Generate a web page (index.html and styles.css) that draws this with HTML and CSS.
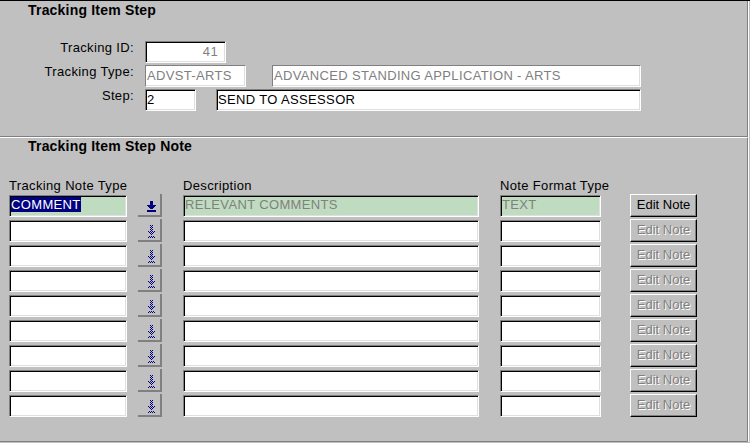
FILE: index.html
```html
<!DOCTYPE html>
<html>
<head>
<meta charset="utf-8">
<link rel="stylesheet" href="styles.css">
</head>
<body>
<div class="screen">
  <section class="panel panel-step">
    <h1 class="title">Tracking Item Step</h1>
    <div class="form">
      <div class="row">
        <span class="lbl">Tracking ID:</span>
        <div class="fld ro w-id">41</div>
      </div>
      <div class="row">
        <span class="lbl">Tracking Type:</span>
        <div class="fld ro flat w-code">ADVST-ARTS</div>
        <div class="fld ro flat w-tdesc">ADVANCED STANDING APPLICATION - ARTS</div>
      </div>
      <div class="row">
        <span class="lbl">Step:</span>
        <div class="fld w-step">2</div>
        <div class="fld w-sdesc">SEND TO ASSESSOR</div>
      </div>
    </div>
  </section>

  <section class="panel panel-note">
    <h2 class="title">Tracking Item Step Note</h2>
    <div class="grid">
      <div class="ghead">
        <span class="c-type">Tracking Note Type</span>
        <span class="c-btn"></span>
        <span class="c-desc">Description</span>
        <span class="c-fmt">Note Format Type</span>
      </div>

      <div class="grow">
        <div class="cell c-type cur"><span class="sel">COMMENT</span></div>
        <div class="abtn c-btn"><svg class="ico-on" width="9" height="11" viewBox="0 0 9 11" shape-rendering="crispEdges"><g fill="#000080"><rect x="3" y="0" width="3" height="4"/><rect x="0" y="4" width="9" height="1"/><rect x="1" y="5" width="7" height="1"/><rect x="2" y="6" width="5" height="1"/><rect x="3" y="7" width="3" height="1"/><rect x="0" y="9" width="9" height="2"/></g></svg></div>
        <div class="cell c-desc cur ro">RELEVANT COMMENTS</div>
        <div class="cell c-fmt cur ro">TEXT</div>
        <div class="ebtn c-edit">Edit Note</div>
      </div>

      <div class="grow">
        <div class="cell c-type"></div>
        <div class="abtn c-btn"><svg class="ico-off" width="7" height="13" viewBox="0 0 7 13" shape-rendering="crispEdges"><path fill="#000080" d="M2 0h1v1h-1zM4 0h1v1h-1zM3 1h1v1h-1zM2 2h1v1h-1zM4 2h1v1h-1zM3 3h1v1h-1zM2 4h1v1h-1zM4 4h1v1h-1zM3 5h1v1h-1zM0 6h1v1h-1zM2 6h1v1h-1zM4 6h1v1h-1zM6 6h1v1h-1zM1 7h1v1h-1zM3 7h1v1h-1zM5 7h1v1h-1zM2 8h1v1h-1zM4 8h1v1h-1zM3 9h1v1h-1zM1 11h1v1h-1zM3 11h1v1h-1zM5 11h1v1h-1zM0 12h1v1h-1zM2 12h1v1h-1zM4 12h1v1h-1zM6 12h1v1h-1z"/></svg></div>
        <div class="cell c-desc"></div>
        <div class="cell c-fmt"></div>
        <div class="ebtn c-edit off">Edit Note</div>
      </div>

      <div class="grow">
        <div class="cell c-type"></div>
        <div class="abtn c-btn"><svg class="ico-off" width="7" height="13" viewBox="0 0 7 13" shape-rendering="crispEdges"><path fill="#000080" d="M2 0h1v1h-1zM4 0h1v1h-1zM3 1h1v1h-1zM2 2h1v1h-1zM4 2h1v1h-1zM3 3h1v1h-1zM2 4h1v1h-1zM4 4h1v1h-1zM3 5h1v1h-1zM0 6h1v1h-1zM2 6h1v1h-1zM4 6h1v1h-1zM6 6h1v1h-1zM1 7h1v1h-1zM3 7h1v1h-1zM5 7h1v1h-1zM2 8h1v1h-1zM4 8h1v1h-1zM3 9h1v1h-1zM1 11h1v1h-1zM3 11h1v1h-1zM5 11h1v1h-1zM0 12h1v1h-1zM2 12h1v1h-1zM4 12h1v1h-1zM6 12h1v1h-1z"/></svg></div>
        <div class="cell c-desc"></div>
        <div class="cell c-fmt"></div>
        <div class="ebtn c-edit off">Edit Note</div>
      </div>

      <div class="grow">
        <div class="cell c-type"></div>
        <div class="abtn c-btn"><svg class="ico-off" width="7" height="13" viewBox="0 0 7 13" shape-rendering="crispEdges"><path fill="#000080" d="M2 0h1v1h-1zM4 0h1v1h-1zM3 1h1v1h-1zM2 2h1v1h-1zM4 2h1v1h-1zM3 3h1v1h-1zM2 4h1v1h-1zM4 4h1v1h-1zM3 5h1v1h-1zM0 6h1v1h-1zM2 6h1v1h-1zM4 6h1v1h-1zM6 6h1v1h-1zM1 7h1v1h-1zM3 7h1v1h-1zM5 7h1v1h-1zM2 8h1v1h-1zM4 8h1v1h-1zM3 9h1v1h-1zM1 11h1v1h-1zM3 11h1v1h-1zM5 11h1v1h-1zM0 12h1v1h-1zM2 12h1v1h-1zM4 12h1v1h-1zM6 12h1v1h-1z"/></svg></div>
        <div class="cell c-desc"></div>
        <div class="cell c-fmt"></div>
        <div class="ebtn c-edit off">Edit Note</div>
      </div>

      <div class="grow">
        <div class="cell c-type"></div>
        <div class="abtn c-btn"><svg class="ico-off" width="7" height="13" viewBox="0 0 7 13" shape-rendering="crispEdges"><path fill="#000080" d="M2 0h1v1h-1zM4 0h1v1h-1zM3 1h1v1h-1zM2 2h1v1h-1zM4 2h1v1h-1zM3 3h1v1h-1zM2 4h1v1h-1zM4 4h1v1h-1zM3 5h1v1h-1zM0 6h1v1h-1zM2 6h1v1h-1zM4 6h1v1h-1zM6 6h1v1h-1zM1 7h1v1h-1zM3 7h1v1h-1zM5 7h1v1h-1zM2 8h1v1h-1zM4 8h1v1h-1zM3 9h1v1h-1zM1 11h1v1h-1zM3 11h1v1h-1zM5 11h1v1h-1zM0 12h1v1h-1zM2 12h1v1h-1zM4 12h1v1h-1zM6 12h1v1h-1z"/></svg></div>
        <div class="cell c-desc"></div>
        <div class="cell c-fmt"></div>
        <div class="ebtn c-edit off">Edit Note</div>
      </div>

      <div class="grow">
        <div class="cell c-type"></div>
        <div class="abtn c-btn"><svg class="ico-off" width="7" height="13" viewBox="0 0 7 13" shape-rendering="crispEdges"><path fill="#000080" d="M2 0h1v1h-1zM4 0h1v1h-1zM3 1h1v1h-1zM2 2h1v1h-1zM4 2h1v1h-1zM3 3h1v1h-1zM2 4h1v1h-1zM4 4h1v1h-1zM3 5h1v1h-1zM0 6h1v1h-1zM2 6h1v1h-1zM4 6h1v1h-1zM6 6h1v1h-1zM1 7h1v1h-1zM3 7h1v1h-1zM5 7h1v1h-1zM2 8h1v1h-1zM4 8h1v1h-1zM3 9h1v1h-1zM1 11h1v1h-1zM3 11h1v1h-1zM5 11h1v1h-1zM0 12h1v1h-1zM2 12h1v1h-1zM4 12h1v1h-1zM6 12h1v1h-1z"/></svg></div>
        <div class="cell c-desc"></div>
        <div class="cell c-fmt"></div>
        <div class="ebtn c-edit off">Edit Note</div>
      </div>

      <div class="grow">
        <div class="cell c-type"></div>
        <div class="abtn c-btn"><svg class="ico-off" width="7" height="13" viewBox="0 0 7 13" shape-rendering="crispEdges"><path fill="#000080" d="M2 0h1v1h-1zM4 0h1v1h-1zM3 1h1v1h-1zM2 2h1v1h-1zM4 2h1v1h-1zM3 3h1v1h-1zM2 4h1v1h-1zM4 4h1v1h-1zM3 5h1v1h-1zM0 6h1v1h-1zM2 6h1v1h-1zM4 6h1v1h-1zM6 6h1v1h-1zM1 7h1v1h-1zM3 7h1v1h-1zM5 7h1v1h-1zM2 8h1v1h-1zM4 8h1v1h-1zM3 9h1v1h-1zM1 11h1v1h-1zM3 11h1v1h-1zM5 11h1v1h-1zM0 12h1v1h-1zM2 12h1v1h-1zM4 12h1v1h-1zM6 12h1v1h-1z"/></svg></div>
        <div class="cell c-desc"></div>
        <div class="cell c-fmt"></div>
        <div class="ebtn c-edit off">Edit Note</div>
      </div>

      <div class="grow">
        <div class="cell c-type"></div>
        <div class="abtn c-btn"><svg class="ico-off" width="7" height="13" viewBox="0 0 7 13" shape-rendering="crispEdges"><path fill="#000080" d="M2 0h1v1h-1zM4 0h1v1h-1zM3 1h1v1h-1zM2 2h1v1h-1zM4 2h1v1h-1zM3 3h1v1h-1zM2 4h1v1h-1zM4 4h1v1h-1zM3 5h1v1h-1zM0 6h1v1h-1zM2 6h1v1h-1zM4 6h1v1h-1zM6 6h1v1h-1zM1 7h1v1h-1zM3 7h1v1h-1zM5 7h1v1h-1zM2 8h1v1h-1zM4 8h1v1h-1zM3 9h1v1h-1zM1 11h1v1h-1zM3 11h1v1h-1zM5 11h1v1h-1zM0 12h1v1h-1zM2 12h1v1h-1zM4 12h1v1h-1zM6 12h1v1h-1z"/></svg></div>
        <div class="cell c-desc"></div>
        <div class="cell c-fmt"></div>
        <div class="ebtn c-edit off">Edit Note</div>
      </div>

      <div class="grow">
        <div class="cell c-type"></div>
        <div class="abtn c-btn"><svg class="ico-off" width="7" height="13" viewBox="0 0 7 13" shape-rendering="crispEdges"><path fill="#000080" d="M2 0h1v1h-1zM4 0h1v1h-1zM3 1h1v1h-1zM2 2h1v1h-1zM4 2h1v1h-1zM3 3h1v1h-1zM2 4h1v1h-1zM4 4h1v1h-1zM3 5h1v1h-1zM0 6h1v1h-1zM2 6h1v1h-1zM4 6h1v1h-1zM6 6h1v1h-1zM1 7h1v1h-1zM3 7h1v1h-1zM5 7h1v1h-1zM2 8h1v1h-1zM4 8h1v1h-1zM3 9h1v1h-1zM1 11h1v1h-1zM3 11h1v1h-1zM5 11h1v1h-1zM0 12h1v1h-1zM2 12h1v1h-1zM4 12h1v1h-1zM6 12h1v1h-1z"/></svg></div>
        <div class="cell c-desc"></div>
        <div class="cell c-fmt"></div>
        <div class="ebtn c-edit off">Edit Note</div>
      </div>
    </div>
  </section>
</div>
</body>
</html>
```

FILE: styles.css
```css
* { box-sizing: border-box; }

html, body {
  margin: 0;
  padding: 0;
  background: #c0c0c0;
}

body {
  font-family: "Liberation Sans", Arial, sans-serif;
  font-size: 13px;
  line-height: 15px;
  letter-spacing: 0.35px;
  color: #000;
  overflow: hidden;
}

.screen {
  width: 750px;
  height: 443px;
  border-top: 1px solid #000;
}

.panel {
  width: 748px;
  border-right: 1px solid #808080;
  box-shadow: 1px 0 0 #fff;
}

.panel-step {
  height: 136px;
  padding-top: 1px;
  border-bottom: 1px solid #808080;
}

.panel-note {
  height: 305px;
  border-top: 1px solid #fff;
  border-bottom: 1px solid #808080;
}

.title {
  margin: 0 0 0 28px;
  font-size: 14px;
  line-height: 16px;
  font-weight: bold;
  letter-spacing: 0.2px;
}

/* ---------- top form ---------- */
.form {
  margin-top: 23px;
  display: flex;
  flex-direction: column;
  gap: 2px;
}

.row {
  display: flex;
  align-items: flex-start;
  height: 22px;
}

.lbl {
  width: 134px;
  text-align: right;
  margin-top: -1px;
  white-space: nowrap;
}

.fld {
  height: 22px;
  margin-left: 11px;
  padding: 2px 1px 0 1px;
  line-height: 16px;
  background: #fff;
  border: 1px solid;
  border-color: #808080 #fff #fff #808080;
  box-shadow: inset 1px 1px 0 #000, inset -1px -1px 0 #dfdfdf;
  white-space: nowrap;
  overflow: hidden;
}

.fld.ro { color: #808080; }
.fld.flat { box-shadow: inset -1px -1px 0 #dfdfdf; }

.w-id { width: 81px; text-align: right; padding-right: 7px; }
.w-code { width: 101px; }
.w-tdesc { width: 369px; margin-left: 26px; }
.w-step { width: 51px; }
.w-sdesc { width: 425px; margin-left: 20px; }

/* ---------- grid ---------- */
.grid {
  margin-top: 24px;
  display: flex;
  flex-direction: column;
  gap: 3px;
}

.ghead {
  display: flex;
  height: 14px;
  white-space: nowrap;
}

.grow {
  display: flex;
  align-items: flex-start;
  height: 22px;
}

.c-type { margin-left: 9px; width: 118px; flex: none; }
.c-btn { margin-left: 11px; width: 24px; flex: none; }
.c-desc { margin-left: 21px; width: 296px; flex: none; }
.c-fmt { margin-left: 21px; width: 101px; flex: none; }
.c-edit { margin-left: 29px; width: 67px; flex: none; }

.cell {
  height: 22px;
  padding: 1px 1px 0 1px;
  background: #fff;
  border: 1px solid;
  border-color: #808080 #fff #fff #808080;
  box-shadow: inset 1px 1px 0 #000, inset -1px -1px 0 #dfdfdf;
  white-space: nowrap;
  overflow: hidden;
}

.cell.cur { background: #c0dcc0; }
.cell.ro { color: #808080; }

.sel {
  background: #000080;
  color: #fff;
}

.abtn {
  height: 23px;
  margin-top: -1px;
  border-right: 2px solid #808080;
  border-bottom: 2px solid #808080;
  display: flex;
  align-items: flex-start;
}

.abtn svg { display: block; }
.ico-on { margin: 7px 0 0 9px; }
.ico-off { margin: 6px 0 0 10px; }

.ebtn {
  height: 23px;
  margin-top: -1px;
  padding-top: 2px;
  text-align: center;
  letter-spacing: 0;
  background: #c0c0c0;
  border: 1px solid;
  border-color: #fff #000 #000 #fff;
  box-shadow: inset -1px -1px 0 #808080;
  white-space: nowrap;
}

.ebtn.off {
  color: #808080;
  text-shadow: 1px 1px 0 #fff;
}
```
